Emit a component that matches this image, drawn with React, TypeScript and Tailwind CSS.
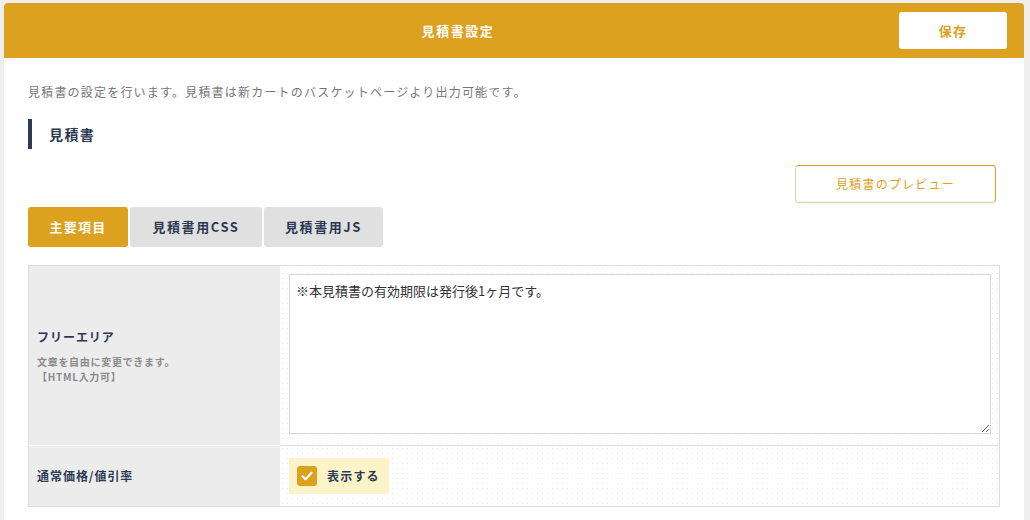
import React from "react";

const font = { fontFamily: '"Noto Sans CJK JP", "Noto Sans", sans-serif' };

export default function App() {
  return (
    <div className="min-h-[520px] w-[1030px] bg-[#efefef] pt-[3px] pl-[4px] overflow-hidden" style={font}>
      <div className="w-[1020px] min-h-[517px] bg-white rounded-t-[4px]">
        {/* header */}
        <div className="h-[55px] bg-[#dca11e] rounded-t-[4px] flex items-center">
          <div className="flex-1 text-center pl-[13px] text-white text-[13px] font-bold tracking-[0.12em]">
            見積書設定
          </div>
          <button className="w-[108px] h-[37px] mr-[17px] bg-white rounded-[3px] text-[#dca11e] text-[13px] font-bold tracking-[0.1em]">
            保存
          </button>
        </div>

        <div className="px-[24px]">
          <p className="mt-[25px] text-[12px] leading-[18px] text-[#777] tracking-[0.1em]">
            見積書の設定を行います。見積書は新カートのバスケットページより出力可能です。
          </p>

          <div className="mt-[18px] h-[30px] border-l-4 border-[#2c3b55] pl-[17px] flex items-center text-[14px] font-bold text-[#2c3b55] tracking-[0.1em]">
            見積書
          </div>

          <div className="mt-[16px] flex justify-end pr-[4px]">
            <button className="w-[201px] h-[38px] rounded-[4px] border border-t-[#dca11e] border-r-[#dca11e] border-l-[#e4cd9c] border-b-[#e4cd9c] text-[12px] text-[#dca11e] tracking-[0.1em]">
              見積書のプレビュー
            </button>
          </div>

          {/* tabs */}
          <div className="mt-[4px] flex gap-[2px]">
            <div className="w-[100px] h-[40px] rounded-[3px] bg-[#dca11e] text-white text-[13px] font-bold tracking-[0.1em] flex items-center justify-center">
              主要項目
            </div>
            <div className="w-[132px] h-[40px] rounded-[3px] bg-[#e0e0e0] text-[#2c3b55] text-[13px] font-bold tracking-[0.12em] flex items-center justify-center">
              見積書用CSS
            </div>
            <div className="w-[119px] h-[40px] rounded-[3px] bg-[#e0e0e0] text-[#2c3b55] text-[13px] font-bold tracking-[0.12em] flex items-center justify-center">
              見積書用JS
            </div>
          </div>

          {/* table */}
          <div className="mt-[18px] border border-[#dddddd] grid grid-cols-[251px_1fr]">
            <div className="bg-[#ececec] pl-[8px] flex flex-col justify-center">
              <div className="text-[12px] leading-[18px] font-bold text-[#2c3b55] tracking-[0.08em]">フリーエリア</div>
              <div className="mt-[8px] text-[10px] leading-[15px] font-bold text-[#8a8a8a] tracking-[0.07em]">
                文章を自由に変更できます。
                <br />
                【HTML入力可】
              </div>
            </div>
            <div className="pl-[9px] pr-[8px] pt-[8px] pb-[11px] bg-white bg-[radial-gradient(#e9e9e9_0.8px,transparent_1px)] bg-[length:5px_5px]">
              <textarea
                className="block w-full h-[160px] border border-[#d6d6d6] bg-white px-[6px] pt-[6px] text-[13px] leading-[20px] text-[#333] outline-none resize"
                style={font}
                defaultValue="※本見積書の有効期限は発行後1ヶ月です。"
              />
            </div>

            <div className="bg-[#ececec] border-t border-white pl-[8px] flex items-center">
              <div className="text-[12px] font-bold text-[#2c3b55] tracking-[0.08em]">通常価格/値引率</div>
            </div>
            <div className="border-t border-[#dddddd] pl-[9px] py-[12px] bg-white bg-[radial-gradient(#e9e9e9_0.8px,transparent_1px)] bg-[length:5px_5px]">
              <label className="inline-flex items-center h-[36px] bg-[#fdf3c9] pl-[8px] pr-[9px] gap-[10px]">
                <span className="w-[20px] h-[20px] rounded-[3px] bg-[#dca11e] flex items-center justify-center">
                  <svg width="12" height="10" viewBox="0 0 12 10" fill="none">
                    <path d="M1.5 5.2 L4.6 8.2 L10.5 1.8" stroke="white" strokeWidth="2.2" strokeLinecap="round" strokeLinejoin="round" />
                  </svg>
                </span>
                <span className="text-[12px] font-bold text-[#2c3b55] tracking-[0.1em]">表示する</span>
              </label>
            </div>
          </div>
        </div>
      </div>
    </div>
  );
}
